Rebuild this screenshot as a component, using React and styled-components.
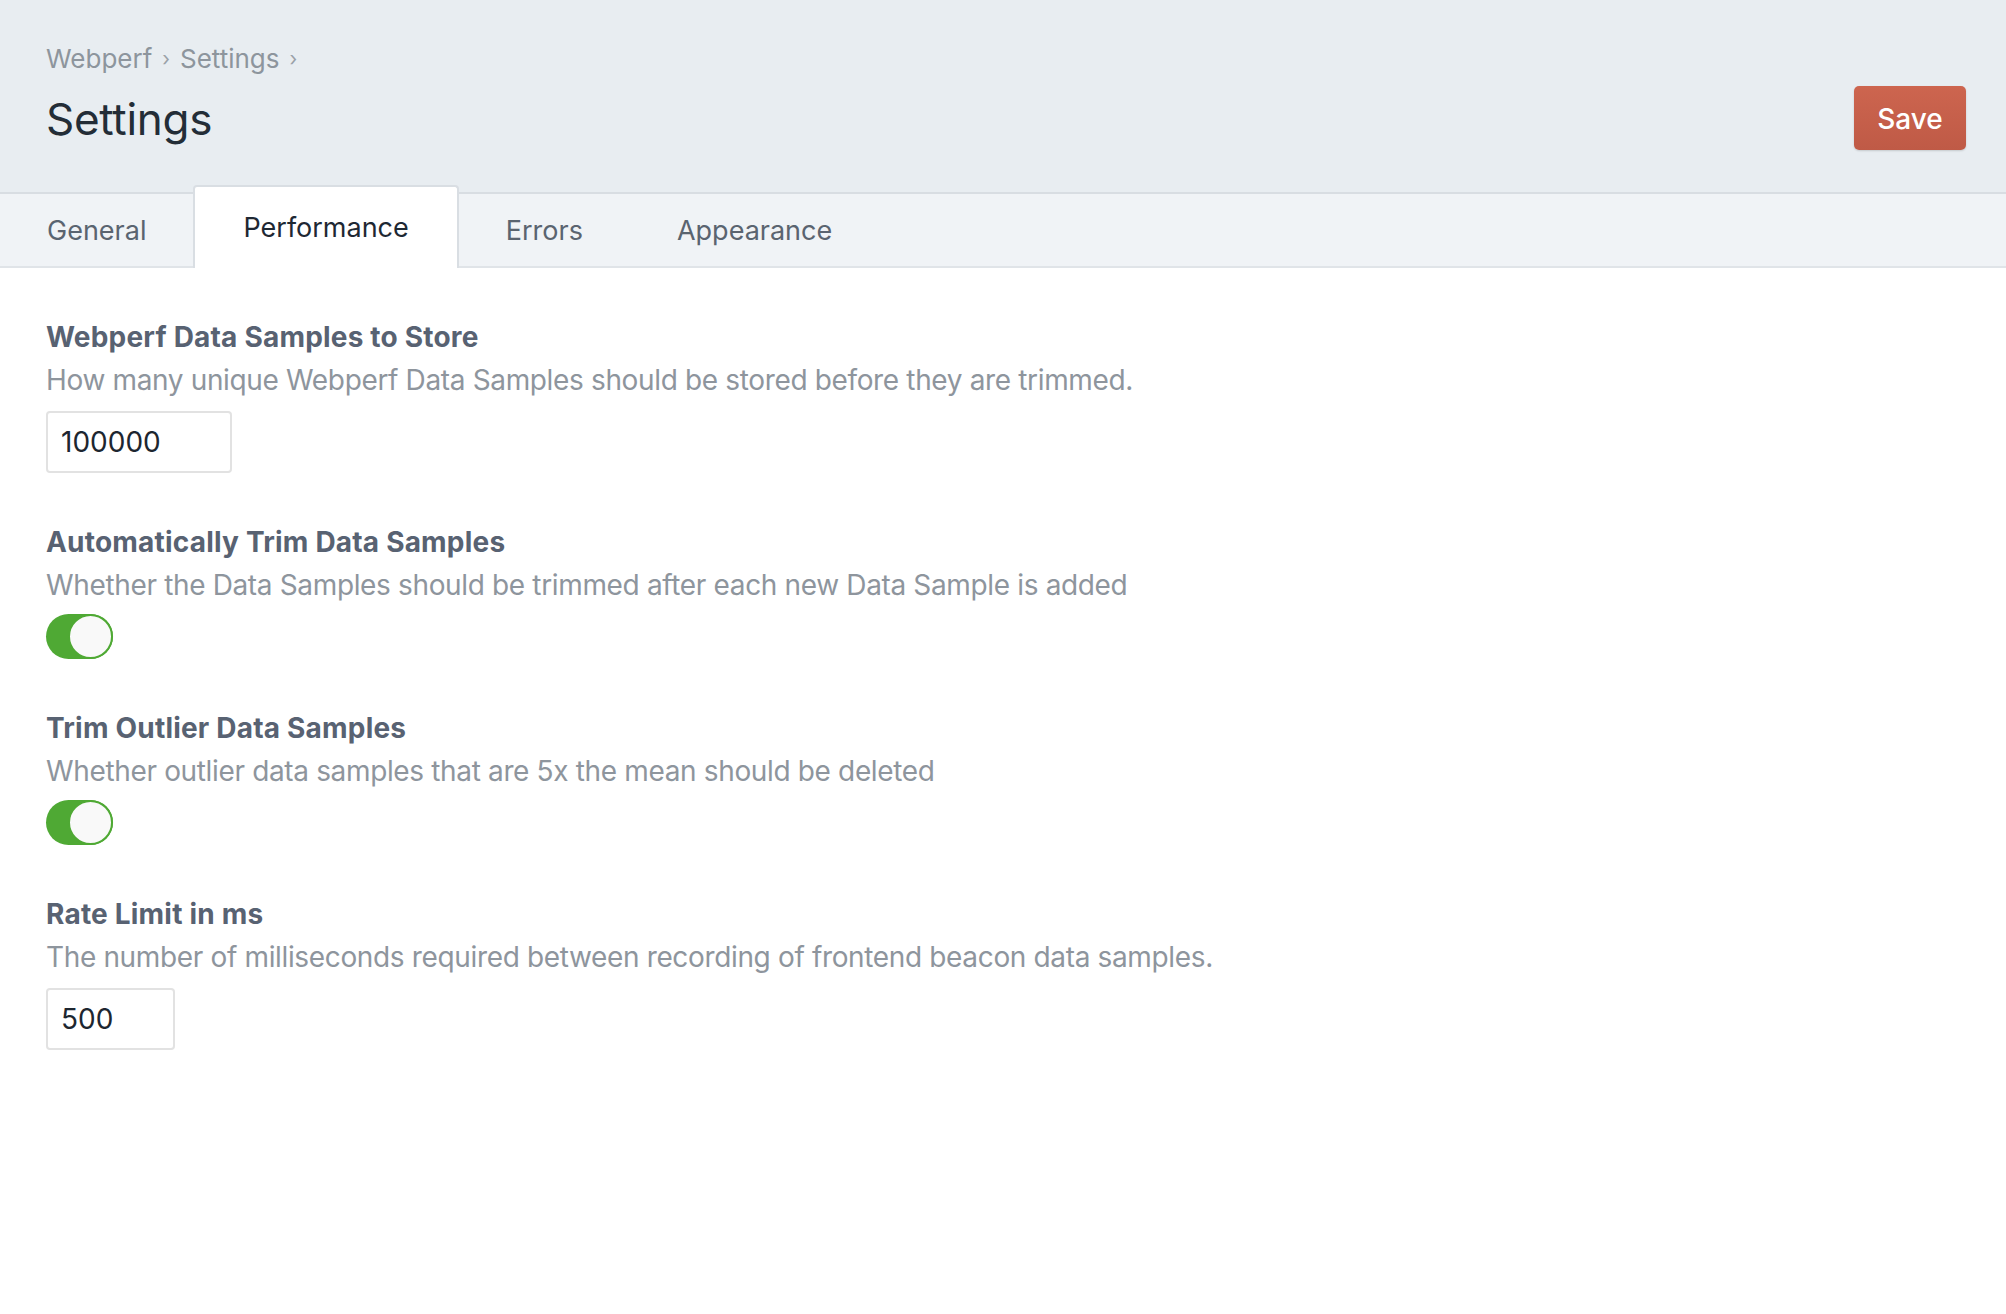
import React from "react";
import styled, { createGlobalStyle } from "styled-components";

const GlobalStyle = createGlobalStyle`
  html, body {
    margin: 0;
    padding: 0;
    background: #ffffff;
  }
  body {
    font-family: Inter, "Noto Sans", "Liberation Sans", sans-serif;
    -webkit-font-smoothing: antialiased;
  }
  * { box-sizing: border-box; }
`;

const Page = styled.div`
  min-height: 1314px;
  background: #ffffff;
`;

const Header = styled.header`
  height: 194px;
  background: #e8edf1;
  border-bottom: 2px solid #d8dde2;
  padding: 39px 40px 0 46px;
  display: flex;
  justify-content: space-between;
  align-items: flex-start;
`;

const TitleBlock = styled.div`
  display: flex;
  flex-direction: column;
  gap: 12px;
`;

const Breadcrumb = styled.nav`
  display: flex;
  align-items: center;
  height: 40px;
  font-size: 26px;
  color: #8d959d;
  gap: 10px;
`;

const Crumb = styled.span`
  line-height: 40px;
`;

const Sep = styled.span`
  font-size: 20px;
  color: #9aa1a8;
  line-height: 40px;
`;

const Title = styled.h1`
  margin: 0;
  font-size: 44px;
  line-height: 56px;
  font-weight: 400;
  color: #232d37;
  letter-spacing: -0.3px;
`;

const SaveButton = styled.button`
  margin-top: 47px;
  width: 112px;
  height: 64px;
  border: 0;
  border-radius: 5px;
  background: linear-gradient(#cd654f, #bf5a46);
  box-shadow: 0 1px 2px rgba(0, 0, 0, 0.15);
  color: #ffffff;
  font-family: inherit;
  font-size: 28px;
  font-weight: 500;
  padding-top: 2px;
  cursor: pointer;
`;

const TabBar = styled.div`
  height: 74px;
  background: #f0f3f6;
  border-bottom: 2px solid #e0e4e8;
  display: flex;
  align-items: stretch;
`;

const Tab = styled.div`
  display: flex;
  align-items: center;
  padding: 0 ${(p) => (p.$active ? "48px" : "47px")};
  font-size: 27px;
  color: ${(p) => (p.$active ? "#1e2833" : "#5a6470")};
  background: ${(p) => (p.$active ? "#ffffff" : "transparent")};
  border: ${(p) => (p.$active ? "2px solid #d9dee3" : "0")};
  border-bottom: 0;
  border-radius: ${(p) => (p.$active ? "4px 4px 0 0" : "0")};
  margin-top: ${(p) => (p.$active ? "-9px" : "0")};
  margin-bottom: ${(p) => (p.$active ? "-2px" : "0")};
  cursor: pointer;
`;

const Content = styled.main`
  padding: 47px 46px;
  display: flex;
  flex-direction: column;
  gap: 47px;
`;

const Field = styled.section`
  display: flex;
  flex-direction: column;
  align-items: flex-start;
`;

const Label = styled.h2`
  margin: 0;
  padding-top: 2px;
  font-size: 28px;
  line-height: 40px;
  font-weight: 700;
  letter-spacing: 0.2px;
  color: #586272;
`;

const Help = styled.p`
  margin: 3px 0 0;
  font-size: 28px;
  line-height: 40px;
  letter-spacing: -0.35px;
  color: #8e959d;
`;

const TextInput = styled.input`
  margin-top: 11px;
  width: ${(p) => p.$width}px;
  height: 62px;
  border: 2px solid #e2e2e2;
  border-radius: 4px;
  padding: 0 13px;
  font-family: inherit;
  font-size: 28px;
  color: #1d2630;
  background: #ffffff;
  outline: none;
`;

const Switch = styled.span`
  margin-top: 9px;
  position: relative;
  display: inline-block;
  width: 67px;
  height: 45px;
  border-radius: 23px;
  background: ${(p) => (p.$on ? "#4fa934" : "#d5d9de")};
`;

const Knob = styled.span`
  position: absolute;
  top: 0;
  ${(p) => (p.$on ? "right: 0;" : "left: 0;")}
  width: 45px;
  height: 45px;
  border-radius: 50%;
  background: #f9f9f9;
  border: 2px solid ${(p) => (p.$on ? "#4fa934" : "#c9ced3")};
`;

const Toggle = ({ on }) => (
  <Switch $on={on} role="switch" aria-checked={on}>
    <Knob $on={on} />
  </Switch>
);

export default function App() {
  return (
    <Page>
      <GlobalStyle />
      <Header>
        <TitleBlock>
          <Breadcrumb>
            <Crumb>Webperf</Crumb>
            <Sep>›</Sep>
            <Crumb>Settings</Crumb>
            <Sep>›</Sep>
          </Breadcrumb>
          <Title>Settings</Title>
        </TitleBlock>
        <SaveButton>Save</SaveButton>
      </Header>
      <TabBar>
        <Tab>General</Tab>
        <Tab $active>Performance</Tab>
        <Tab>Errors</Tab>
        <Tab>Appearance</Tab>
      </TabBar>
      <Content>
        <Field>
          <Label>Webperf Data Samples to Store</Label>
          <Help>How many unique Webperf Data Samples should be stored before they are trimmed.</Help>
          <TextInput $width={186} defaultValue="100000" />
        </Field>
        <Field>
          <Label>Automatically Trim Data Samples</Label>
          <Help>Whether the Data Samples should be trimmed after each new Data Sample is added</Help>
          <Toggle on />
        </Field>
        <Field>
          <Label>Trim Outlier Data Samples</Label>
          <Help>Whether outlier data samples that are 5x the mean should be deleted</Help>
          <Toggle on />
        </Field>
        <Field>
          <Label>Rate Limit in ms</Label>
          <Help>The number of milliseconds required between recording of frontend beacon data samples.</Help>
          <TextInput $width={129} defaultValue="500" />
        </Field>
      </Content>
    </Page>
  );
}
